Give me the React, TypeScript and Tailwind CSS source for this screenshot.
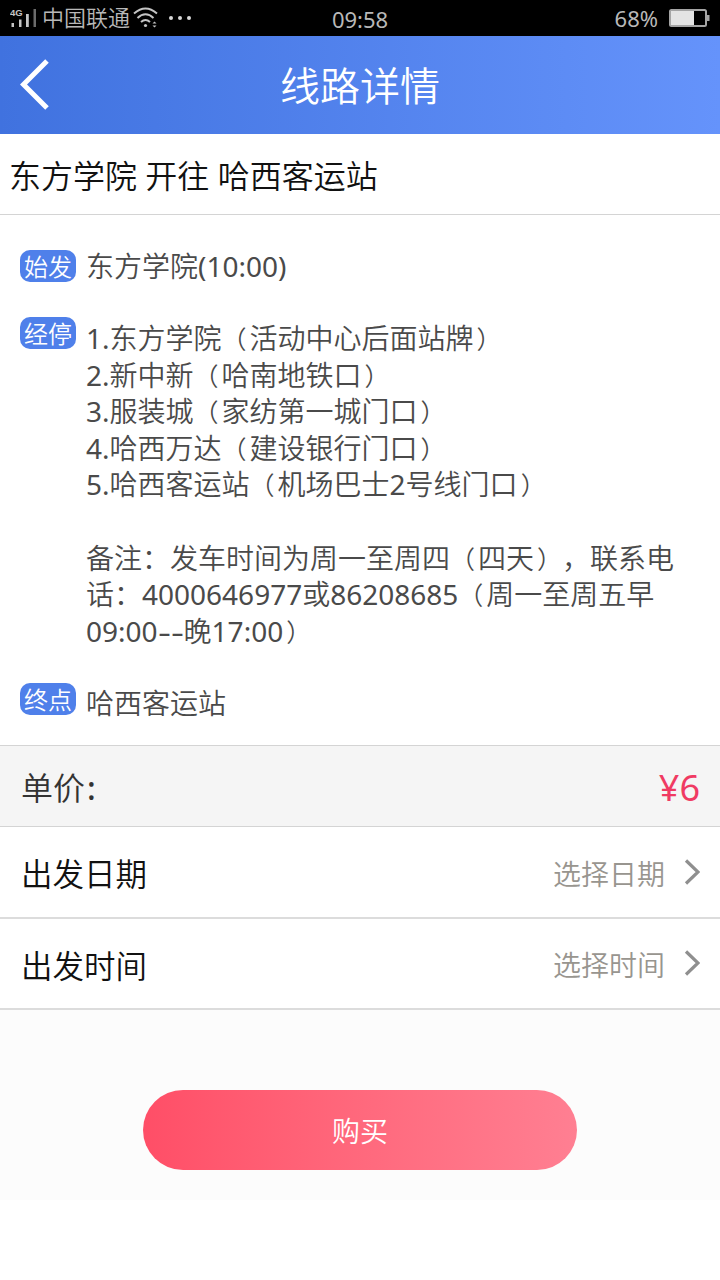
import type { ReactNode } from 'react';

const stops = [
    '1.东方学院（活动中心后面站牌）',
    '2.新中新（哈南地铁口）',
    '3.服装城（家纺第一城门口）',
    '4.哈西万达（建设银行门口）',
    '5.哈西客运站（机场巴士2号线门口）',
];

// Full-width brackets are set slightly smaller, nearer the middle of their cell
const Line = ({ text }: { text: string }) => (
    <p className="h-[36.6px]">
        {text.split(/([（）]|--|[0-9.:()]+)/).map((part, i) => {
            if (part === '（') return <span key={i} className="mr-[3px] text-[25px]">{part}</span>;
            if (part === '）') return <span key={i} className="ml-[3px] text-[25px]">{part}</span>;
            if (part === '--') return <span key={i} className="inline-block w-[26px] origin-left scale-x-[1.44] font-normal">{part}</span>;
            if (/^[0-9.:()]+$/.test(part)) return <span key={i} className="font-normal">{part}</span>;
            return part;
        })}
    </p>
);

const StatusBar = () => (
    <div className="grid h-9 grid-cols-3 items-center bg-black text-[22px] leading-8 text-[#b8b8b8]">
        <div className="flex items-center pl-2.5">
            <svg width="28" height="20" viewBox="0 0 28 20" className="mr-1 shrink-0">
                <text x="0" y="8" fontSize="9.5" fontWeight="700" fill="#c4c4c4" fontFamily="Liberation Sans, sans-serif">4G</text>
                <rect x="1.5" y="15" width="2.5" height="4" fill="#c4c4c4" />
                <rect x="9" y="11.5" width="2.5" height="7.5" fill="#c4c4c4" />
                <rect x="16" y="6" width="2.8" height="13" fill="#c4c4c4" />
                <rect x="23.5" y="1" width="2.5" height="18" fill="#6b6b6b" />
            </svg>
            <span className="pb-0.5">中国联通</span>
            <svg width="26" height="22" viewBox="0 0 26 22" className="ml-[3px] shrink-0" fill="none" stroke="#c4c4c4" strokeWidth="2">
                <path d="M1 6.5Q12.5 -3.5 24 6.5" />
                <path d="M4.5 11Q12.5 3.5 20.5 11" />
                <path d="M8 15Q12.5 11 17 15" />
                <circle cx="12.5" cy="18.5" r="1.6" fill="#c4c4c4" stroke="none" />
                <path d="M21.5 14.5l2 2h-4zM21.5 20.5l2-2h-4z" fill="#c4c4c4" stroke="none" />
            </svg>
            <svg width="22" height="4" viewBox="0 0 22 4" className="ml-2.5 shrink-0" fill="#d8d8d8">
                <circle cx="2" cy="2" r="2" />
                <circle cx="11" cy="2" r="2" />
                <circle cx="20" cy="2" r="2" />
            </svg>
        </div>
        <div className="pt-0.5 text-center font-normal">09:58</div>
        <div className="flex items-center justify-end pr-2.5">
            <span className="mr-[11px] pb-px font-normal">68%</span>
            <svg width="41" height="18" viewBox="0 0 41 18">
                <rect x="1" y="1" width="36" height="16" rx="1.5" fill="none" stroke="#a5a5a5" strokeWidth="2" />
                <rect x="2" y="2" width="23" height="14" fill="#e4e4e4" />
                <rect x="38" y="6" width="2.5" height="6" fill="#a5a5a5" />
            </svg>
        </div>
    </div>
);

const Badge = ({ children }: { children: ReactNode }) => (
    <span className="flex h-8 w-14 shrink-0 items-center justify-center rounded-[10px] bg-[#4f80ea] pt-0.5 text-2xl leading-8 text-white">
        {children}
    </span>
);

const PickerRow = ({ label, placeholder }: { label: string; placeholder: string }) => (
    <div className="flex h-[91.5px] items-center justify-between border-b-2 border-[#dcdcdc] bg-white pr-5 pl-[21px]">
        <span className="pt-1 text-[31.5px] text-[#111]">{label}</span>
        <div className="flex items-center">
            <span className="pt-1 text-[28px] text-[#98958f]">{placeholder}</span>
            <svg width="16" height="26" viewBox="0 0 16 26" className="ml-[19px]" fill="none" stroke="#8f8f8f" strokeWidth="3.2">
                <path d="M2 1.5L14 13L2 24.5" />
            </svg>
        </div>
    </div>
);

export default function App() {
    return (
        <div className="flex h-[1280px] w-[720px] flex-col overflow-hidden bg-white font-['Noto_Sans','Noto_Sans_CJK_SC',sans-serif] font-[350] [text-spacing-trim:space-all]" lang="zh-CN">
            <StatusBar />

            <header className="grid h-[98px] grid-cols-[1fr_auto_1fr] items-center bg-linear-to-r from-[#4072df] to-[#6593fb] text-white">
                <svg width="30" height="52" viewBox="0 0 30 52" className="ml-5" fill="none" stroke="white" strokeWidth="5">
                    <path d="M27 2L3.5 25.5L27 49" />
                </svg>
                <h1 className="pt-0.5 text-[40px] leading-[96px] font-[350]">线路详情</h1>
            </header>

            <h2 className="h-[81px] border-b border-[#d4d4d4] pl-[9px] text-[32px] leading-[84px] font-[350] text-[#111]">
                东方学院 开往 哈西客运站
            </h2>

            <section className="flex h-[530px] flex-col px-5 pt-[35px] text-[28px] leading-[36.6px] text-[#4a4a4a]">
                <div className="flex h-[67px] gap-2.5">
                    <Badge>始发</Badge>
                    <div className="-mt-0.5">
                        <Line text="东方学院(10:00)" />
                    </div>
                </div>
                <div className="flex h-[366px] gap-2.5">
                    <Badge>经停</Badge>
                    <div className="pt-[3px] whitespace-nowrap">
                        {stops.map((stop) => (
                            <Line key={stop} text={stop} />
                        ))}
                        <br />
                        <Line text="备注：发车时间为周一至周四（四天），联系电" />
                        <Line text="话：4000646977或86208685（周一至周五早" />
                        <Line text="09:00--晚17:00）" />
                    </div>
                </div>
                <div className="flex gap-2.5">
                    <Badge>终点</Badge>
                    <span className="pt-0.5">哈西客运站</span>
                </div>
            </section>

            <div className="flex h-[82px] items-center justify-between border-y border-[#d4d4d4] bg-[#f5f5f5] pr-5 pl-[21px]">
                <span className="pt-1 text-[32px] text-[#333]">单价<span className="ml-0.5 font-medium">:</span></span>
                <span className="pt-1 text-[36px] font-normal text-[#f03a63]">¥6</span>
            </div>
            <PickerRow label="出发日期" placeholder="选择日期" />
            <PickerRow label="出发时间" placeholder="选择时间" />

            <div className="flex h-[190px] justify-center bg-[#fcfcfc] pt-20">
                <button className="h-20 w-[434px] rounded-full bg-linear-to-r from-[#ff4e67] to-[#ff7f92] pt-0.5 text-[28px] leading-[78px] text-white">
                    购买
                </button>
            </div>
        </div>
    );
}
